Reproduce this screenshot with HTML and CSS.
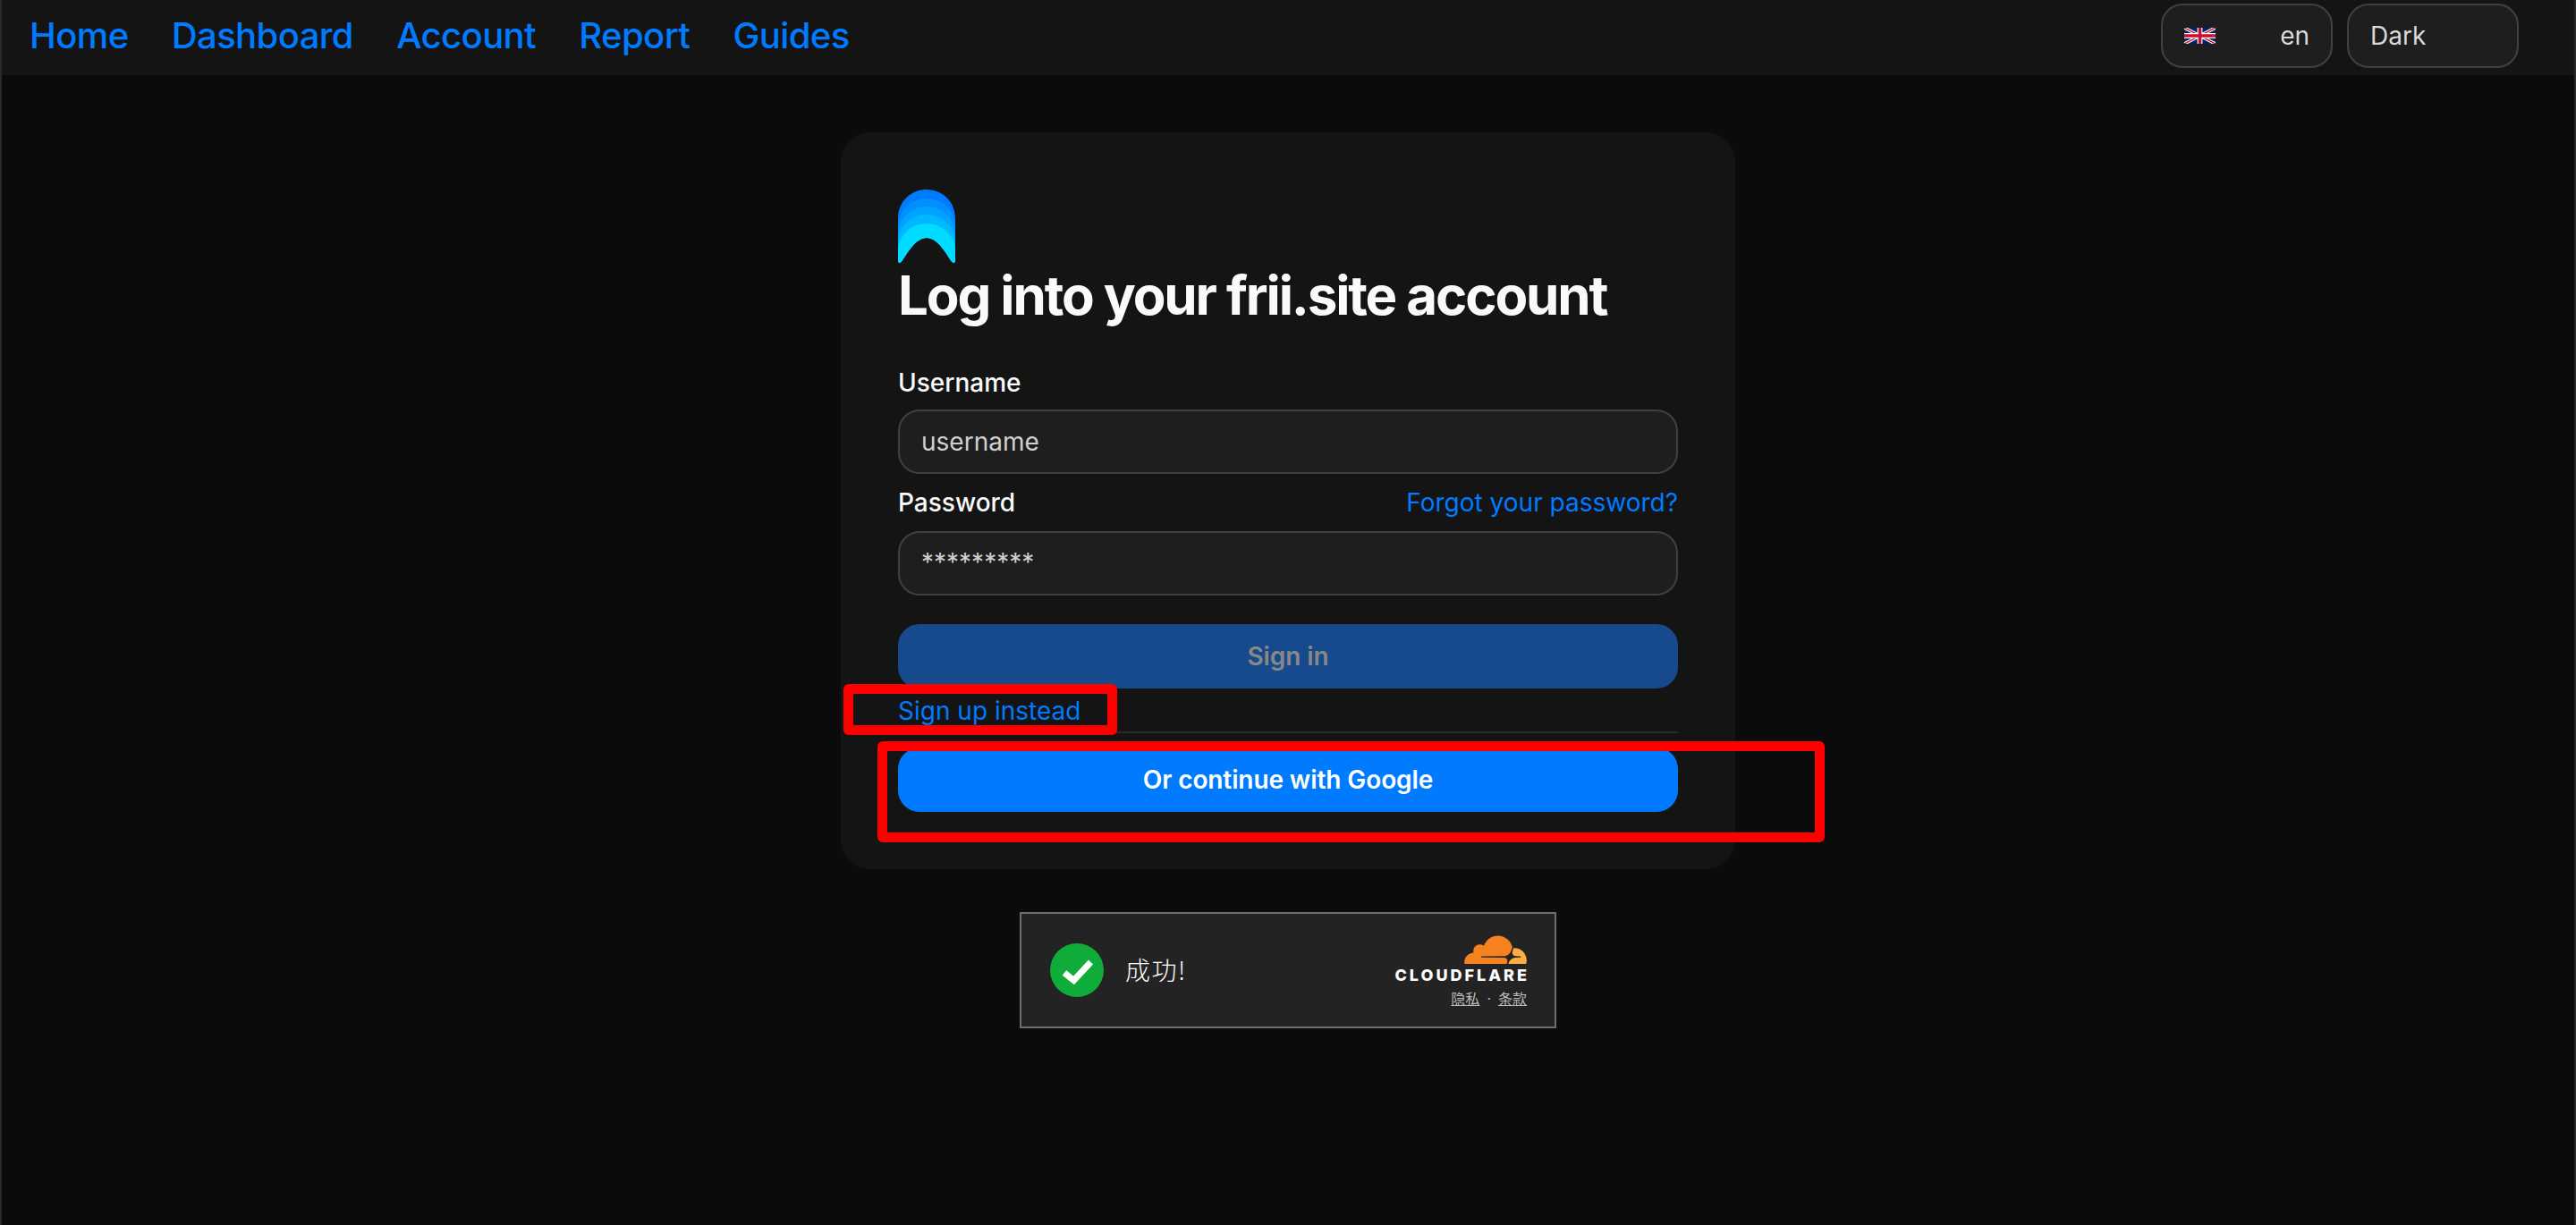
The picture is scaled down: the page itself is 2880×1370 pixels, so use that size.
FILE: index.html
```html
<!DOCTYPE html>
<html lang="en">
<head>
<meta charset="utf-8">
<title>Log into your frii.site account</title>
<link rel="stylesheet" href="styles.css">
</head>
<body>
<header class="nav">
  <nav class="nav-links">
    <a href="#">Home</a>
    <a href="#">Dashboard</a>
    <a href="#">Account</a>
    <a href="#">Report</a>
    <a href="#">Guides</a>
  </nav>
  <div class="nav-controls">
    <div class="select select-lang">
      <svg class="flag" viewBox="0 0 60 30" preserveAspectRatio="none" aria-hidden="true">
        <rect width="60" height="30" fill="#012169"/>
        <path d="M0 0 60 30M60 0 0 30" stroke="#fff" stroke-width="6"/>
        <path d="M0 0 60 30M60 0 0 30" stroke="#c8102e" stroke-width="2.4"/>
        <path d="M30 0V30M0 15H60" stroke="#fff" stroke-width="10"/>
        <path d="M30 0V30M0 15H60" stroke="#c8102e" stroke-width="6"/>
      </svg>
      <span>en</span>
    </div>
    <div class="select"><span>Dark</span></div>
  </div>
</header>

<main class="page">
  <section class="card">
    <svg class="logo" viewBox="0 0 64 82" aria-hidden="true">
      <defs>
        <clipPath id="logo-clip">
          <path d="M0 32C0 14 14 0 32 0S64 14 64 32V79C64 82 62 82.500 60.500 81C56 76 46 54 32 54S8 76 3.500 81C2 82.500 0 82 0 79Z"/>
        </clipPath>
      </defs>
      <g clip-path="url(#logo-clip)">
        <rect width="64" height="82" fill="#007bff"/>
        <path d="M0 42C0 24 14 10 32 10S64 24 64 42V82H0Z" fill="#008fff"/>
        <path d="M0 51C0 33 14 19 32 19S64 33 64 51V82H0Z" fill="#00a3ff"/>
        <path d="M0 60C0 42 14 28 32 28S64 42 64 60V82H0Z" fill="#00b8ff"/>
        <path d="M0 70C0 52 14 38 32 38S64 52 64 70V82H0Z" fill="#00dcff"/>
      </g>
    </svg>
    <h1 class="title">Log into your frii.site account</h1>

    <label class="label label-first">Username</label>
    <div class="input">username</div>

    <div class="label-row">
      <label class="label">Password</label>
      <a href="#" class="link">Forgot your password?</a>
    </div>
    <div class="input input-secret">*********</div>

    <button class="btn btn-disabled" type="button">Sign in</button>
    <div class="signup-row"><a href="#" class="link">Sign up instead</a><span class="mark mark-signup"></span></div>
    <hr class="divider">
    <div class="google-wrap">
      <button class="btn btn-primary" type="button">Or continue with Google</button>
      <span class="mark mark-google"></span>
    </div>
  </section>

  <section class="turnstile">
    <div class="ts-status">
      <svg class="ts-check" viewBox="0 0 60 60" aria-hidden="true">
        <circle cx="30" cy="30" r="30" fill="#0fac3a"/>
        <path d="M16 33 26.500 41.500 45.500 21" fill="none" stroke="#fff" stroke-width="7"/>
      </svg>
      <span class="ts-text">成功!</span>
    </div>
    <div class="ts-brand">
      <svg class="ts-cloud" viewBox="0 6.400 24 11.030" aria-hidden="true">
        <path fill="#f6821f" d="M16.5088 16.8447c.1475-.5068.0908-.9707-.1553-1.3154-.2246-.3164-.6045-.499-1.0615-.5205l-8.6592-.1123a.1559.1559 0 0 1-.1333-.0713c-.0283-.042-.0351-.0986-.021-.1553.0278-.084.1123-.1484.2036-.1562l8.7359-.1123c1.0351-.0489 2.1601-.8868 2.5537-1.9136l.499-1.3013c.0215-.0561.0293-.1128.0147-.168-.5625-2.5463-2.835-4.4453-5.5499-4.4453-2.5039 0-4.6284 1.6177-5.3876 3.8614-.4927-.3658-1.1187-.5625-1.794-.499-1.2026.119-2.1665 1.083-2.2861 2.2856-.0283.31-.0069.6128.0635.894C1.5683 13.171 0 14.7754 0 16.752c0 .1748.0142.3515.0352.5273.0141.083.0844.1475.1689.1475h15.9814c.0909 0 .1758-.0645.2032-.1553l.12-.4268z"/>
        <path fill="#fbad41" d="M19.2656 11.2813c-.0771 0-.1611 0-.2383.0112-.0566 0-.1054.0415-.127.0976l-.3378 1.1744c-.1475.5068-.0918.9707.1543 1.3164.2256.3164.6055.498 1.0625.5195l1.8437.1133c.0557 0 .1055.0263.1329.0703.0283.043.0351.1074.0214.1562-.0283.084-.1132.1485-.204.1553l-1.921.1123c-1.041.0488-2.1582.8867-2.5527 1.914l-.1406.3585c-.0283.0713.0215.1416.0986.1416h6.5977c.0771 0 .1474-.0489.169-.126.1122-.4082.1757-.837.1757-1.2803 0-2.6025-2.125-4.727-4.7344-4.727"/>
      </svg>
      <span class="ts-word">CLOUDFLARE</span>
      <span class="ts-links"><a href="#">隐私</a><span class="ts-dot">·</span><a href="#">条款</a></span>
    </div>
  </section>
</main>
</body>
</html>
```

FILE: styles.css
```css
* { box-sizing: border-box; }

html, body { height: 100%; }

body {
  margin: 0;
  background: #0b0b0b;
  border-left: 2px solid #2a2a2a;
  border-right: 2px solid #2a2a2a;
  font-family: "Inter", "Noto Sans CJK SC", sans-serif;
  color: #fff;
  overflow: hidden;
}

a { color: #007bff; text-decoration: none; }

.nav {
  height: 84px;
  background: #141414;
  display: flex;
  align-items: center;
  justify-content: space-between;
  padding: 0 62px 4px 31px;
}

.nav-links {
  display: flex;
  gap: 48.2px;
  font-size: 40px;
  font-weight: 500;
  letter-spacing: -0.6px;
  margin-top: -1px;
}

.nav-controls { display: flex; gap: 16px; }

.select {
  width: 192px;
  height: 72px;
  border: 2px solid #404040;
  border-radius: 24px;
  background: #1e1e1e;
  color: #d9d9d9;
  font-size: 28px;
  display: flex;
  align-items: center;
  padding: 0 24px;
}

.select-lang { justify-content: space-between; }

.flag { width: 35px; height: 18px; display: block; }

.page {
  display: flex;
  flex-direction: column;
  align-items: center;
  padding-top: 64px;
}

.card {
  width: 1000px;
  height: 824px;
  padding: 64px;
  border-radius: 32px;
  background: #141414;
  display: flex;
  flex-direction: column;
}

.logo { width: 64px; height: 82px; display: block; flex: none; }

.title {
  margin: 0;
  font-size: 60px;
  font-weight: 650;
  line-height: 72px;
  letter-spacing: -2.12px;
  color: #f9fafb;
}

.label {
  font-size: 28px;
  font-weight: 500;
  line-height: 36px;
  color: #f9fafb;
}

.label-first { margin-top: 44px; margin-bottom: 12px; }

.label-row {
  display: flex;
  justify-content: space-between;
  margin: 14px 0 14px;
  line-height: 36px;
}

.link { font-size: 28px; line-height: 36px; }

.input {
  height: 72px;
  border: 2px solid #404040;
  border-radius: 24px;
  background: #1e1e1e;
  color: #d0d0d0;
  font-size: 28px;
  display: flex;
  align-items: center;
  padding: 0 24px;
  flex: none;
}

.input-secret { padding-bottom: 3px; }

.btn {
  display: block;
  width: 100%;
  height: 72px;
  border: 0;
  border-radius: 24px;
  font-family: inherit;
  font-size: 28px;
  font-weight: 600;
  letter-spacing: -0.1px;
  flex: none;
}

.btn-disabled {
  margin-top: 32px;
  background: #164a8c;
  color: #888;
}

.btn-primary {
  background: #007bff;
  color: #fff;
}

.signup-row {
  position: relative;
  height: 48px;
  padding-top: 7px;
}

.divider {
  width: 100%;
  height: 2px;
  margin: 0 0 16px;
  border: 0;
  background: #2b2b2b;
  flex: none;
}

.google-wrap { position: relative; height: 72px; flex: none; }

.mark {
  position: absolute;
  border: 11px solid #ff0000;
  border-radius: 6px;
  pointer-events: none;
}

.mark-signup { left: -61px; top: -5px; width: 306px; height: 57px; }

.mark-google { left: -23px; top: -7px; width: 1059px; height: 113px; }

.turnstile {
  width: 600px;
  height: 130px;
  margin-top: 48px;
  border: 2px solid #6e6e6e;
  background: #232323;
  display: flex;
  align-items: stretch;
  justify-content: space-between;
  padding: 0 31px 0 32px;
}

.ts-status {
  display: flex;
  align-items: center;
  gap: 24px;
}

.ts-check { width: 60px; height: 60px; display: block; }

.ts-text {
  font-family: "Noto Sans CJK SC", sans-serif;
  font-size: 28px;
  line-height: 36px;
  margin-top: -2px;
  color: #fff;
  font-weight: 300;
  letter-spacing: 1.5px;
}

.ts-brand {
  display: flex;
  flex-direction: column;
  align-items: flex-end;
  padding-top: 24px;
}

.ts-cloud { width: 70px; height: 32px; display: block; }

.ts-word {
  margin-top: 4px;
  margin-right: -3px;
  font-size: 18px;
  line-height: 18px;
  font-weight: 800;
  letter-spacing: 3px;
  color: #fff;
}

.ts-links {
  margin-top: 7px;
  font-size: 16px;
  line-height: 20px;
  color: #bbb;
  display: flex;
  gap: 8px;
}

.ts-links a { color: #bbb; text-decoration: underline; }
```
